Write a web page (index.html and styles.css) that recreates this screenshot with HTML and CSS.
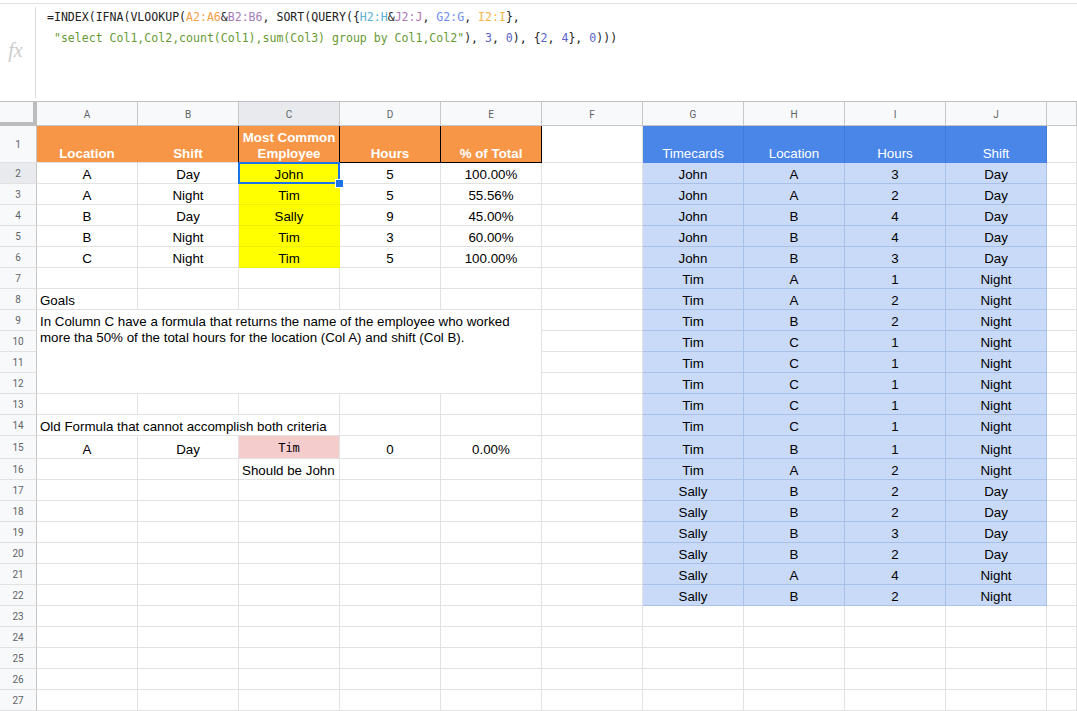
FILE: index.html
```html
<!DOCTYPE html>
<html>
<head>
<meta charset="utf-8">
<link rel="stylesheet" href="styles.css">
</head>
<body>
<div class="fbar">
  <div class="frow">
    <div class="fx">fx</div>
    <div class="ftext"><div class="fl">=INDEX(IFNA(VLOOKUP(<span class="r1">A2:A6</span>&amp;<span class="r2">B2:B6</span>, SORT(QUERY({<span class="r3">H2:H</span>&amp;<span class="r4">J2:J</span>, <span class="r5">G2:G</span>, <span class="r6">I2:I</span>},</div><div class="fl"> <span class="str">"select Col1,Col2,count(Col1),sum(Col3) group by Col1,Col2"</span>), <span class="num">3</span>, <span class="num">0</span>), {<span class="num">2</span>, <span class="num">4</span>}, <span class="num">0</span>)))</div></div>
  </div>
</div>
<div class="sheet">
  <div class="corner"></div><div class="ch">A</div><div class="ch">B</div><div class="ch sc">C</div><div class="ch">D</div><div class="ch">E</div><div class="ch">F</div><div class="ch">G</div><div class="ch">H</div><div class="ch">I</div><div class="ch">J</div><div class="ch"></div>

  <div class="rh">1</div><div class="c or ora">Location</div><div class="c or orb">Shift</div><div class="c or bk"><span class="wrap">Most Common<br>Employee</span></div><div class="c or bk">Hours</div><div class="c or bk">% of Total</div><div class="c"></div><div class="c bl">Timecards</div><div class="c bl">Location</div><div class="c bl">Hours</div><div class="c bl">Shift</div><div class="c"></div>

  <div class="rh rs">2</div><div class="c">A</div><div class="c">Day</div><div class="c ye sel">John</div><div class="c">5</div><div class="c">100.00%</div><div class="c"></div><div class="c lb">John</div><div class="c lb">A</div><div class="c lb">3</div><div class="c lb">Day</div><div class="c"></div>

  <div class="rh">3</div><div class="c">A</div><div class="c">Night</div><div class="c ye">Tim</div><div class="c">5</div><div class="c">55.56%</div><div class="c"></div><div class="c lb">John</div><div class="c lb">A</div><div class="c lb">2</div><div class="c lb">Day</div><div class="c"></div>

  <div class="rh">4</div><div class="c">B</div><div class="c">Day</div><div class="c ye">Sally</div><div class="c">9</div><div class="c">45.00%</div><div class="c"></div><div class="c lb">John</div><div class="c lb">B</div><div class="c lb">4</div><div class="c lb">Day</div><div class="c"></div>

  <div class="rh">5</div><div class="c">B</div><div class="c">Night</div><div class="c ye">Tim</div><div class="c">3</div><div class="c">60.00%</div><div class="c"></div><div class="c lb">John</div><div class="c lb">B</div><div class="c lb">4</div><div class="c lb">Day</div><div class="c"></div>

  <div class="rh">6</div><div class="c">C</div><div class="c">Night</div><div class="c ye">Tim</div><div class="c">5</div><div class="c">100.00%</div><div class="c"></div><div class="c lb">John</div><div class="c lb">B</div><div class="c lb">3</div><div class="c lb">Day</div><div class="c"></div>

  <div class="rh">7</div><div class="c"></div><div class="c"></div><div class="c"></div><div class="c"></div><div class="c"></div><div class="c"></div><div class="c lb">Tim</div><div class="c lb">A</div><div class="c lb">1</div><div class="c lb">Night</div><div class="c"></div>

  <div class="rh">8</div><div class="c l">Goals</div><div class="c"></div><div class="c"></div><div class="c"></div><div class="c"></div><div class="c"></div><div class="c lb">Tim</div><div class="c lb">A</div><div class="c lb">2</div><div class="c lb">Night</div><div class="c"></div>

  <div class="rh">9</div><div class="c merged">In Column C have a formula that returns the name of the employee who worked more tha 50% of the total hours for the location (Col A) and shift (Col B).</div><div class="c"></div><div class="c lb">Tim</div><div class="c lb">B</div><div class="c lb">2</div><div class="c lb">Night</div><div class="c"></div>

  <div class="rh">10</div><div class="c"></div><div class="c lb">Tim</div><div class="c lb">C</div><div class="c lb">1</div><div class="c lb">Night</div><div class="c"></div>

  <div class="rh">11</div><div class="c"></div><div class="c lb">Tim</div><div class="c lb">C</div><div class="c lb">1</div><div class="c lb">Night</div><div class="c"></div>

  <div class="rh">12</div><div class="c"></div><div class="c lb">Tim</div><div class="c lb">C</div><div class="c lb">1</div><div class="c lb">Night</div><div class="c"></div>

  <div class="rh">13</div><div class="c"></div><div class="c"></div><div class="c"></div><div class="c"></div><div class="c"></div><div class="c"></div><div class="c lb">Tim</div><div class="c lb">C</div><div class="c lb">1</div><div class="c lb">Night</div><div class="c"></div>

  <div class="rh">14</div><div class="c l span3">Old Formula that cannot accomplish both criteria</div><div class="c"></div><div class="c"></div><div class="c"></div><div class="c lb">Tim</div><div class="c lb">C</div><div class="c lb">1</div><div class="c lb">Night</div><div class="c"></div>

  <div class="rh">15</div><div class="c">A</div><div class="c">Day</div><div class="c pk mono">Tim</div><div class="c">0</div><div class="c">0.00%</div><div class="c"></div><div class="c lb">Tim</div><div class="c lb">B</div><div class="c lb">1</div><div class="c lb">Night</div><div class="c"></div>

  <div class="rh">16</div><div class="c"></div><div class="c"></div><div class="c l">Should be John</div><div class="c"></div><div class="c"></div><div class="c"></div><div class="c lb">Tim</div><div class="c lb">A</div><div class="c lb">2</div><div class="c lb">Night</div><div class="c"></div>

  <div class="rh">17</div><div class="c"></div><div class="c"></div><div class="c"></div><div class="c"></div><div class="c"></div><div class="c"></div><div class="c lb">Sally</div><div class="c lb">B</div><div class="c lb">2</div><div class="c lb">Day</div><div class="c"></div>

  <div class="rh">18</div><div class="c"></div><div class="c"></div><div class="c"></div><div class="c"></div><div class="c"></div><div class="c"></div><div class="c lb">Sally</div><div class="c lb">B</div><div class="c lb">2</div><div class="c lb">Day</div><div class="c"></div>

  <div class="rh">19</div><div class="c"></div><div class="c"></div><div class="c"></div><div class="c"></div><div class="c"></div><div class="c"></div><div class="c lb">Sally</div><div class="c lb">B</div><div class="c lb">3</div><div class="c lb">Day</div><div class="c"></div>

  <div class="rh">20</div><div class="c"></div><div class="c"></div><div class="c"></div><div class="c"></div><div class="c"></div><div class="c"></div><div class="c lb">Sally</div><div class="c lb">B</div><div class="c lb">2</div><div class="c lb">Day</div><div class="c"></div>

  <div class="rh">21</div><div class="c"></div><div class="c"></div><div class="c"></div><div class="c"></div><div class="c"></div><div class="c"></div><div class="c lb">Sally</div><div class="c lb">A</div><div class="c lb">4</div><div class="c lb">Night</div><div class="c"></div>

  <div class="rh">22</div><div class="c"></div><div class="c"></div><div class="c"></div><div class="c"></div><div class="c"></div><div class="c"></div><div class="c lb">Sally</div><div class="c lb">B</div><div class="c lb">2</div><div class="c lb">Night</div><div class="c"></div>

  <div class="rh">23</div><div class="c"></div><div class="c"></div><div class="c"></div><div class="c"></div><div class="c"></div><div class="c"></div><div class="c"></div><div class="c"></div><div class="c"></div><div class="c"></div><div class="c"></div>

  <div class="rh">24</div><div class="c"></div><div class="c"></div><div class="c"></div><div class="c"></div><div class="c"></div><div class="c"></div><div class="c"></div><div class="c"></div><div class="c"></div><div class="c"></div><div class="c"></div>

  <div class="rh">25</div><div class="c"></div><div class="c"></div><div class="c"></div><div class="c"></div><div class="c"></div><div class="c"></div><div class="c"></div><div class="c"></div><div class="c"></div><div class="c"></div><div class="c"></div>

  <div class="rh">26</div><div class="c"></div><div class="c"></div><div class="c"></div><div class="c"></div><div class="c"></div><div class="c"></div><div class="c"></div><div class="c"></div><div class="c"></div><div class="c"></div><div class="c"></div>

  <div class="rh">27</div><div class="c"></div><div class="c"></div><div class="c"></div><div class="c"></div><div class="c"></div><div class="c"></div><div class="c"></div><div class="c"></div><div class="c"></div><div class="c"></div><div class="c"></div>
</div>
</body>
</html>
```

FILE: styles.css
```css
* { box-sizing: border-box; margin: 0; padding: 0; }
html, body { background: #fff; }
body {
  width: 1077px;
  height: 711px;
  overflow: hidden;
  font-family: "Liberation Sans", Arial, sans-serif;
}

/* formula bar */
.fbar {
  height: 102px;
  padding-top: 3px;
  border-bottom: 1px solid #c0c0c0;
}
.frow {
  display: flex;
  height: 98px;
  border-top: 1px solid #e0e0e0;
}
.fx {
  width: 36px;
  flex: none;
  display: flex;
  align-items: center;
  justify-content: center;
  padding: 0 4px 4px 0;
  border-right: 1px solid #dadce0;
  margin: 3px 0 3px 0;
  font-family: "Liberation Serif", "DejaVu Serif", serif;
  font-style: italic;
  font-size: 20px;
  color: #cccccc;
}
.ftext {
  padding: 3px 0 0 11px;
  font-family: "DejaVu Sans Mono", "Liberation Mono", monospace;
  font-size: 11.55px;
  line-height: 21px;
  color: #222;
  white-space: pre;
}
.r1 { color: #f5a04b; }
.r2 { color: #a57cb6; }
.r3 { color: #5bb1d8; }
.r4 { color: #b277b4; }
.r5 { color: #6d8ef0; }
.r6 { color: #f4b447; }
.str { color: #679a33; }
.num { color: #5b63c9; }

/* grid */
.sheet {
  display: grid;
  grid-template-columns: 37px repeat(10, 101px) 1fr;
  grid-template-rows: 24px 37px repeat(13, 21px) 23px repeat(12, 21px);
}
.corner {
  background: #f8f9fa;
  border-right: 4px solid #bdbdbd;
  border-bottom: 4px solid #bdbdbd;
}
.ch, .rh {
  background: #f8f9fa;
  border-right: 1px solid #c7c7c7;
  border-bottom: 1px solid #c7c7c7;
  display: flex;
  align-items: center;
  justify-content: center;
  font-family: Roboto, "Liberation Sans", sans-serif;
  font-size: 10px;
  color: #5f6368;
}
.ch { padding-top: 1px; }
.rh { border-bottom-color: #e2e2e2; }
.sc, .rs { background: #e8eaed; }

.c {
  border-right: 1px solid #e2e2e2;
  border-bottom: 1px solid #e2e2e2;
  display: flex;
  align-items: flex-end;
  justify-content: center;
  padding: 0 3px 0;
  font-size: 13.33px;
  line-height: 16px;
  color: #000;
  white-space: nowrap;
  overflow: hidden;
}
.l { justify-content: flex-start; }
.span3 { grid-column: span 3; }
.merged {
  grid-column: span 5;
  grid-row: span 4;
  align-items: flex-start;
  justify-content: flex-start;
  white-space: normal;
  padding-top: 4px;
}

.or {
  background: #f79646;
  color: #fff;
  font-weight: bold;
}
.ora { border-right-color: #f79646; }
.orb { border-right-color: #000; }
.bk { border-right-color: #000; border-bottom-color: #000; }
.wrap { text-align: center; white-space: nowrap; }

.bl {
  background: #4a86e8;
  color: #fff;
  border-right-color: #3f7bdc;
  border-bottom-color: #4a86e8;
}
.lb {
  background: #c9daf8;
  border-right-color: #a9c0e8;
  border-bottom-color: #a9c0e8;
}
.ye { background: #ffff00; border-right-color: #ffff00; border-bottom-color: #f0f000; }
.pk { background: #f4cccc; }
.mono {
  font-family: "DejaVu Sans Mono", "Liberation Mono", monospace;
  font-size: 12px;
  padding-bottom: 2px;
}

/* active cell selection */
.sel { position: relative; overflow: visible; z-index: 2; }
.sel::before {
  content: "";
  position: absolute;
  left: -1px;
  top: -1px;
  right: -1px;
  bottom: -1px;
  border: 2px solid #1a73e8;
}
.sel::after {
  content: "";
  position: absolute;
  right: -5px;
  bottom: -5px;
  width: 7px;
  height: 7px;
  background: #1a73e8;
  border: 1px solid #fff;
}
```
